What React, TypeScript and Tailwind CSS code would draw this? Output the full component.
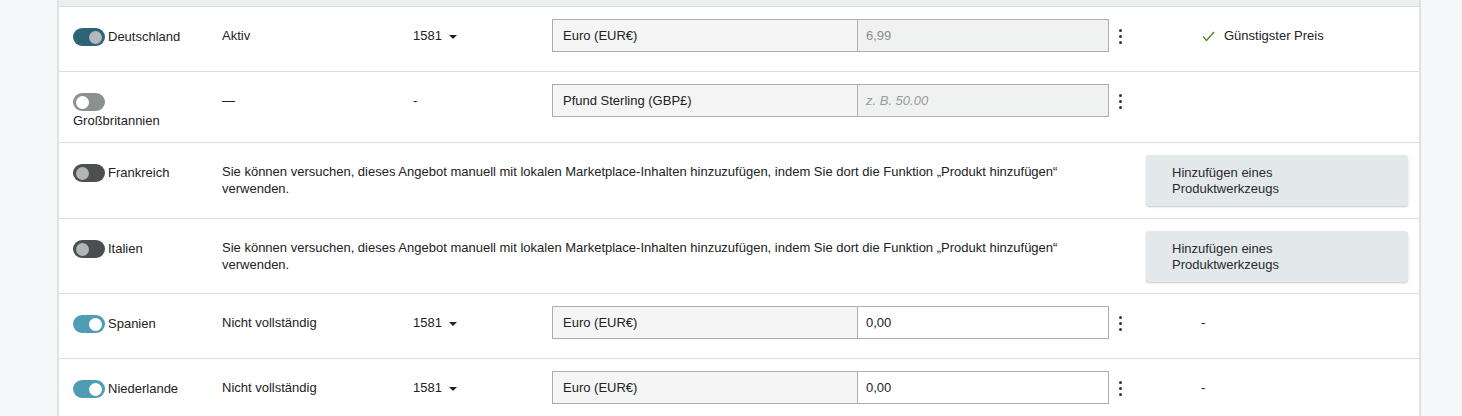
import React from "react"

type ToggleKind = "onDark" | "onLight" | "offLight" | "offDark"

const TOGGLE: Record<ToggleKind, { track: string; knob: string; on: boolean }> = {
    onDark: { track: "bg-[#2e6376]", knob: "bg-[#b3b8ba]", on: true },
    onLight: { track: "bg-[#4f9db2]", knob: "bg-white", on: true },
    offLight: { track: "bg-[#8d9090]", knob: "bg-white", on: false },
    offDark: { track: "bg-[#4b4f50]", knob: "bg-[#b1b5b7]", on: false },
}

function Toggle({ kind }: { kind: ToggleKind }) {
    const t = TOGGLE[kind]
    return (
        <span
            className={`flex h-[18px] w-[32px] shrink-0 items-center rounded-full px-[3px] ${t.track} ${
                t.on ? "justify-end" : "justify-start"
            }`}
        >
            <span className={`block h-[13px] w-[13px] rounded-full ${t.knob}`} />
        </span>
    )
}

function Country({ kind, name }: { kind: ToggleKind; name: string }) {
    return (
        <div className="w-[149px] shrink-0 pl-[14px] pr-[20px] pt-[21px]">
            <div className="flex flex-wrap items-center gap-x-[3px] gap-y-[2px]">
                <Toggle kind={kind} />
                <span className="leading-[16px]">{name}</span>
            </div>
        </div>
    )
}

function Kebab() {
    return (
        <div className="ml-[10px] flex flex-col items-center gap-[3px] pt-[10px]">
            <span className="block h-[3px] w-[3px] rounded-full bg-[#333]" />
            <span className="block h-[3px] w-[3px] rounded-full bg-[#333]" />
            <span className="block h-[3px] w-[3px] rounded-full bg-[#333]" />
        </div>
    )
}

function Caret() {
    return <span className="ml-[7px] inline-block h-0 w-0 border-x-[4px] border-t-[4px] border-x-transparent border-t-[#222] align-middle" />
}

type PriceRow = {
    kind: ToggleKind
    name: string
    status: string
    qty: string | null
    currency: string
    price: string
    priceMode: "disabled" | "placeholder" | "active"
    result: "best" | "dash" | "none"
    height: string
}

function InputGroup({ currency, price, mode }: { currency: string; price: string; mode: PriceRow["priceMode"] }) {
    return (
        <div className="flex h-[33px] w-[557px] border border-[#adadad]">
            <div className="flex w-[305px] items-center border-r border-[#adadad] bg-[#f5f5f5] pl-[10px]">{currency}</div>
            <div
                className={`flex flex-1 items-center pl-[8px] ${
                    mode === "active" ? "bg-white text-[#222]" : "bg-[#f0f2f2] text-[#8c8c8c]"
                } ${mode === "placeholder" ? "italic text-[#9a9a9a]" : ""}`}
            >
                {price}
            </div>
        </div>
    )
}

function Row({ r }: { r: PriceRow }) {
    return (
        <div className={`flex items-start border-b border-[#dcdfe0] ${r.height}`}>
            <Country kind={r.kind} name={r.name} />
            <div className="w-[191px] shrink-0 pl-[14px] pt-[21px] leading-[16px]">{r.status}</div>
            <div className="w-[139px] shrink-0 pl-[14px] pt-[21px] leading-[16px]">
                {r.qty ? (
                    <>
                        {r.qty}
                        <Caret />
                    </>
                ) : (
                    "-"
                )}
            </div>
            <div className="flex shrink-0 pl-[14px] pt-[12px]">
                <InputGroup currency={r.currency} price={r.price} mode={r.priceMode} />
                <Kebab />
            </div>
            <div className="flex items-center pl-[77px] pt-[21px] leading-[16px]">
                {r.result === "best" && (
                    <>
                        <svg width="13" height="11" viewBox="0 0 13 11" className="ml-[3px] mr-[9px]">
                            <polyline points="1,5.5 4.5,9.5 12,1" fill="none" stroke="#4f8a2b" strokeWidth="1.4" />
                        </svg>
                        Günstigster Preis
                    </>
                )}
                {r.result === "dash" && <span className="ml-[2px]">-</span>}
            </div>
        </div>
    )
}

function ManualRow({ kind, name, height }: { kind: ToggleKind; name: string; height: string }) {
    return (
        <div className={`flex items-start border-b border-[#dcdfe0] ${height}`}>
            <Country kind={kind} name={name} />
            <div className="w-[874px] shrink-0 pl-[14px] pr-[10px] pt-[20px] leading-[17px]">
                Sie können versuchen, dieses Angebot manuell mit lokalen Marketplace-Inhalten hinzuzufügen, indem Sie dort die Funktion „Produkt
                hinzufügen“ verwenden.
            </div>
            <div className="ml-[64px] pt-[12px]">
                <button className="flex h-[51px] w-[262px] flex-col justify-center rounded-[3px] bg-[#e3e9eb] pl-[26px] text-left leading-[16px] text-[#2a2a2a] shadow-[0_1px_2px_rgba(0,0,0,0.22)]">
                    <span>Hinzufügen eines</span>
                    <span>Produktwerkzeugs</span>
                </button>
            </div>
        </div>
    )
}

const ROWS: Record<string, PriceRow> = {
    de: {
        kind: "onDark",
        name: "Deutschland",
        status: "Aktiv",
        qty: "1581",
        currency: "Euro (EUR€)",
        price: "6,99",
        priceMode: "disabled",
        result: "best",
        height: "h-[65px]",
    },
    gb: {
        kind: "offLight",
        name: "Großbritannien",
        status: "—",
        qty: null,
        currency: "Pfund Sterling (GBP£)",
        price: "z. B. 50.00",
        priceMode: "placeholder",
        result: "none",
        height: "h-[71px]",
    },
    es: {
        kind: "onLight",
        name: "Spanien",
        status: "Nicht vollständig",
        qty: "1581",
        currency: "Euro (EUR€)",
        price: "0,00",
        priceMode: "active",
        result: "dash",
        height: "h-[65px]",
    },
    nl: {
        kind: "onLight",
        name: "Niederlande",
        status: "Nicht vollständig",
        qty: "1581",
        currency: "Euro (EUR€)",
        price: "0,00",
        priceMode: "active",
        result: "dash",
        height: "h-[65px]",
    },
}

export default function App() {
    return (
        <div className="h-[416px] w-[1462px] overflow-hidden bg-[#f5f7f8] pl-[57px] text-[13px] text-[#222] [font-family:'Liberation_Sans',Arial,sans-serif]">
            <div className="h-full w-[1364px] border-x-2 border-[#dfe2e3] bg-white">
                <div className="h-[7px] border-b border-[#d9dcdd] bg-[#eceff0]" />
                <Row r={ROWS.de} />
                <Row r={ROWS.gb} />
                <ManualRow kind="offDark" name="Frankreich" height="h-[76px]" />
                <ManualRow kind="offDark" name="Italien" height="h-[75px]" />
                <Row r={ROWS.es} />
                <Row r={ROWS.nl} />
            </div>
        </div>
    )
}
